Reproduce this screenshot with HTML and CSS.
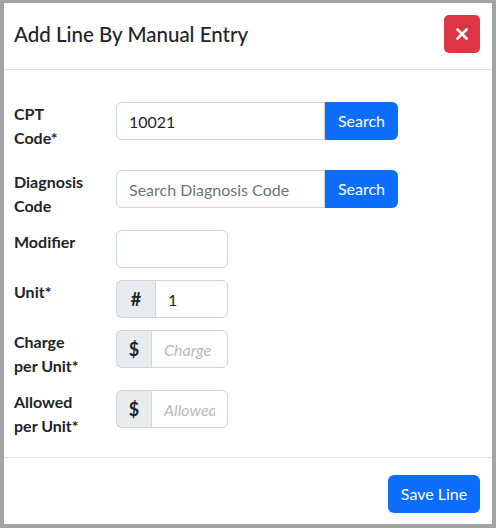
FILE: index.html
```html
<!DOCTYPE html>
<html lang="en">
<head>
<meta charset="utf-8">
<title>Add Line By Manual Entry</title>
<link rel="stylesheet" href="styles.css">
</head>
<body>
<div class="modal">
  <div class="modal-header">
    <h5 class="modal-title">Add Line By Manual Entry</h5>
    <button class="btn-close" type="button" aria-label="Close">
      <svg width="12" height="12" viewBox="0 0 12 12"><path d="M1.5 1.5 L10.5 10.5 M10.5 1.5 L1.5 10.5" stroke="#fff" stroke-width="2.6" stroke-linecap="square" fill="none"/></svg>
    </button>
  </div>
  <div class="modal-body">
    <div class="form-grid">
      <label class="field-label">CPT<br>Code*</label>
      <div class="input-group group-search">
        <input class="form-control" type="text" value="10021">
        <button class="btn btn-primary btn-attached" type="button">Search</button>
      </div>

      <label class="field-label gap-top">Diagnosis<br>Code</label>
      <div class="input-group group-search gap-top">
        <input class="form-control" type="text" placeholder="Search Diagnosis Code">
        <button class="btn btn-primary btn-attached" type="button">Search</button>
      </div>

      <label class="field-label">Modifier</label>
      <div class="input-group group-small">
        <input class="form-control" type="text">
      </div>

      <label class="field-label">Unit*</label>
      <div class="input-group group-small">
        <span class="addon addon-hash">#</span>
        <input class="form-control" type="text" value="1">
      </div>

      <label class="field-label">Charge<br>per Unit*</label>
      <div class="input-group group-small">
        <span class="addon addon-dollar">$</span>
        <input class="form-control italic-ph" type="text" placeholder="Charge">
      </div>

      <label class="field-label">Allowed<br>per Unit*</label>
      <div class="input-group group-small">
        <span class="addon addon-dollar">$</span>
        <input class="form-control italic-ph" type="text" placeholder="Allowed">
      </div>
    </div>
  </div>
  <div class="modal-footer">
    <button class="btn btn-primary btn-save" type="button">Save Line</button>
  </div>
</div>
</body>
</html>
```

FILE: styles.css
```css
* { box-sizing: border-box; }

html, body {
  margin: 0;
  padding: 0;
  height: 100%;
}

body {
  background: #a4a4a4;
  font-family: "Segoe UI", "Lato", "Liberation Sans", sans-serif;
  color: #212529;
  padding: 3px 4px 4px 4px;
}

.modal {
  background: #fff;
  height: 521px;
  display: flex;
  flex-direction: column;
  overflow: hidden;
}

.modal-header {
  display: flex;
  align-items: center;
  justify-content: space-between;
  padding: 12px 12px 16px 10px;
  border-bottom: 1px solid #dee2e6;
}

.modal-title {
  margin: 0;
  font-size: 20.5px;
  font-weight: 500;
  line-height: 24px;
  color: #212529;
}

.btn-close {
  width: 36px;
  height: 38px;
  border: 0;
  border-radius: 5px;
  background: #dc3545;
  display: flex;
  align-items: center;
  justify-content: center;
  padding: 0;
}

.modal-body {
  padding: 32px 10px 19px 10px;
}

.form-grid {
  display: grid;
  grid-template-columns: 102px auto;
  row-gap: 12px;
  align-items: start;
}

.gap-top {
  margin-top: 8px;
}

.field-label {
  font-size: 16px;
  font-weight: 700;
  line-height: 24px;
  color: #212529;
}

.input-group {
  display: flex;
  height: 38px;
}

.group-search { width: 282px; }
.group-small { width: 112px; }

.form-control {
  flex: 1 1 auto;
  min-width: 0;
  width: 100%;
  height: 38px;
  border: 1px solid #ced4da;
  border-radius: 6px;
  padding: 6px 12px;
  font-family: inherit;
  font-size: 16px;
  color: #212529;
  background: #fff;
  outline: none;
}

.form-control::placeholder {
  color: #6c757d;
}

.italic-ph::placeholder {
  font-style: italic;
  color: #b5b9bd;
}

.group-search .form-control {
  border-top-right-radius: 0;
  border-bottom-right-radius: 0;
}

.addon {
  display: flex;
  align-items: center;
  justify-content: center;
  flex: 0 0 auto;
  background: #e9ecef;
  border: 1px solid #ced4da;
  border-right: 0;
  border-radius: 6px 0 0 6px;
  font-size: 18px;
  font-weight: 700;
  color: #212529;
}

.addon-hash { width: 39px; }
.addon-dollar { width: 35px; }

.addon + .form-control {
  border-top-left-radius: 0;
  border-bottom-left-radius: 0;
}

.btn {
  font-family: inherit;
  font-size: 16px;
  line-height: 24px;
  border: 0;
  color: #fff;
  cursor: pointer;
}

.btn-primary {
  background: #0d6efd;
}

.btn-attached {
  flex: 0 0 73px;
  height: 38px;
  padding: 0;
  border-radius: 0 6px 6px 0;
}

.modal-footer {
  border-top: 1px solid #dee2e6;
  display: flex;
  justify-content: flex-end;
  padding: 17px 12px 11px 12px;
}

.btn-save {
  width: 92px;
  height: 38px;
  border-radius: 6px;
  padding: 0;
}
```
